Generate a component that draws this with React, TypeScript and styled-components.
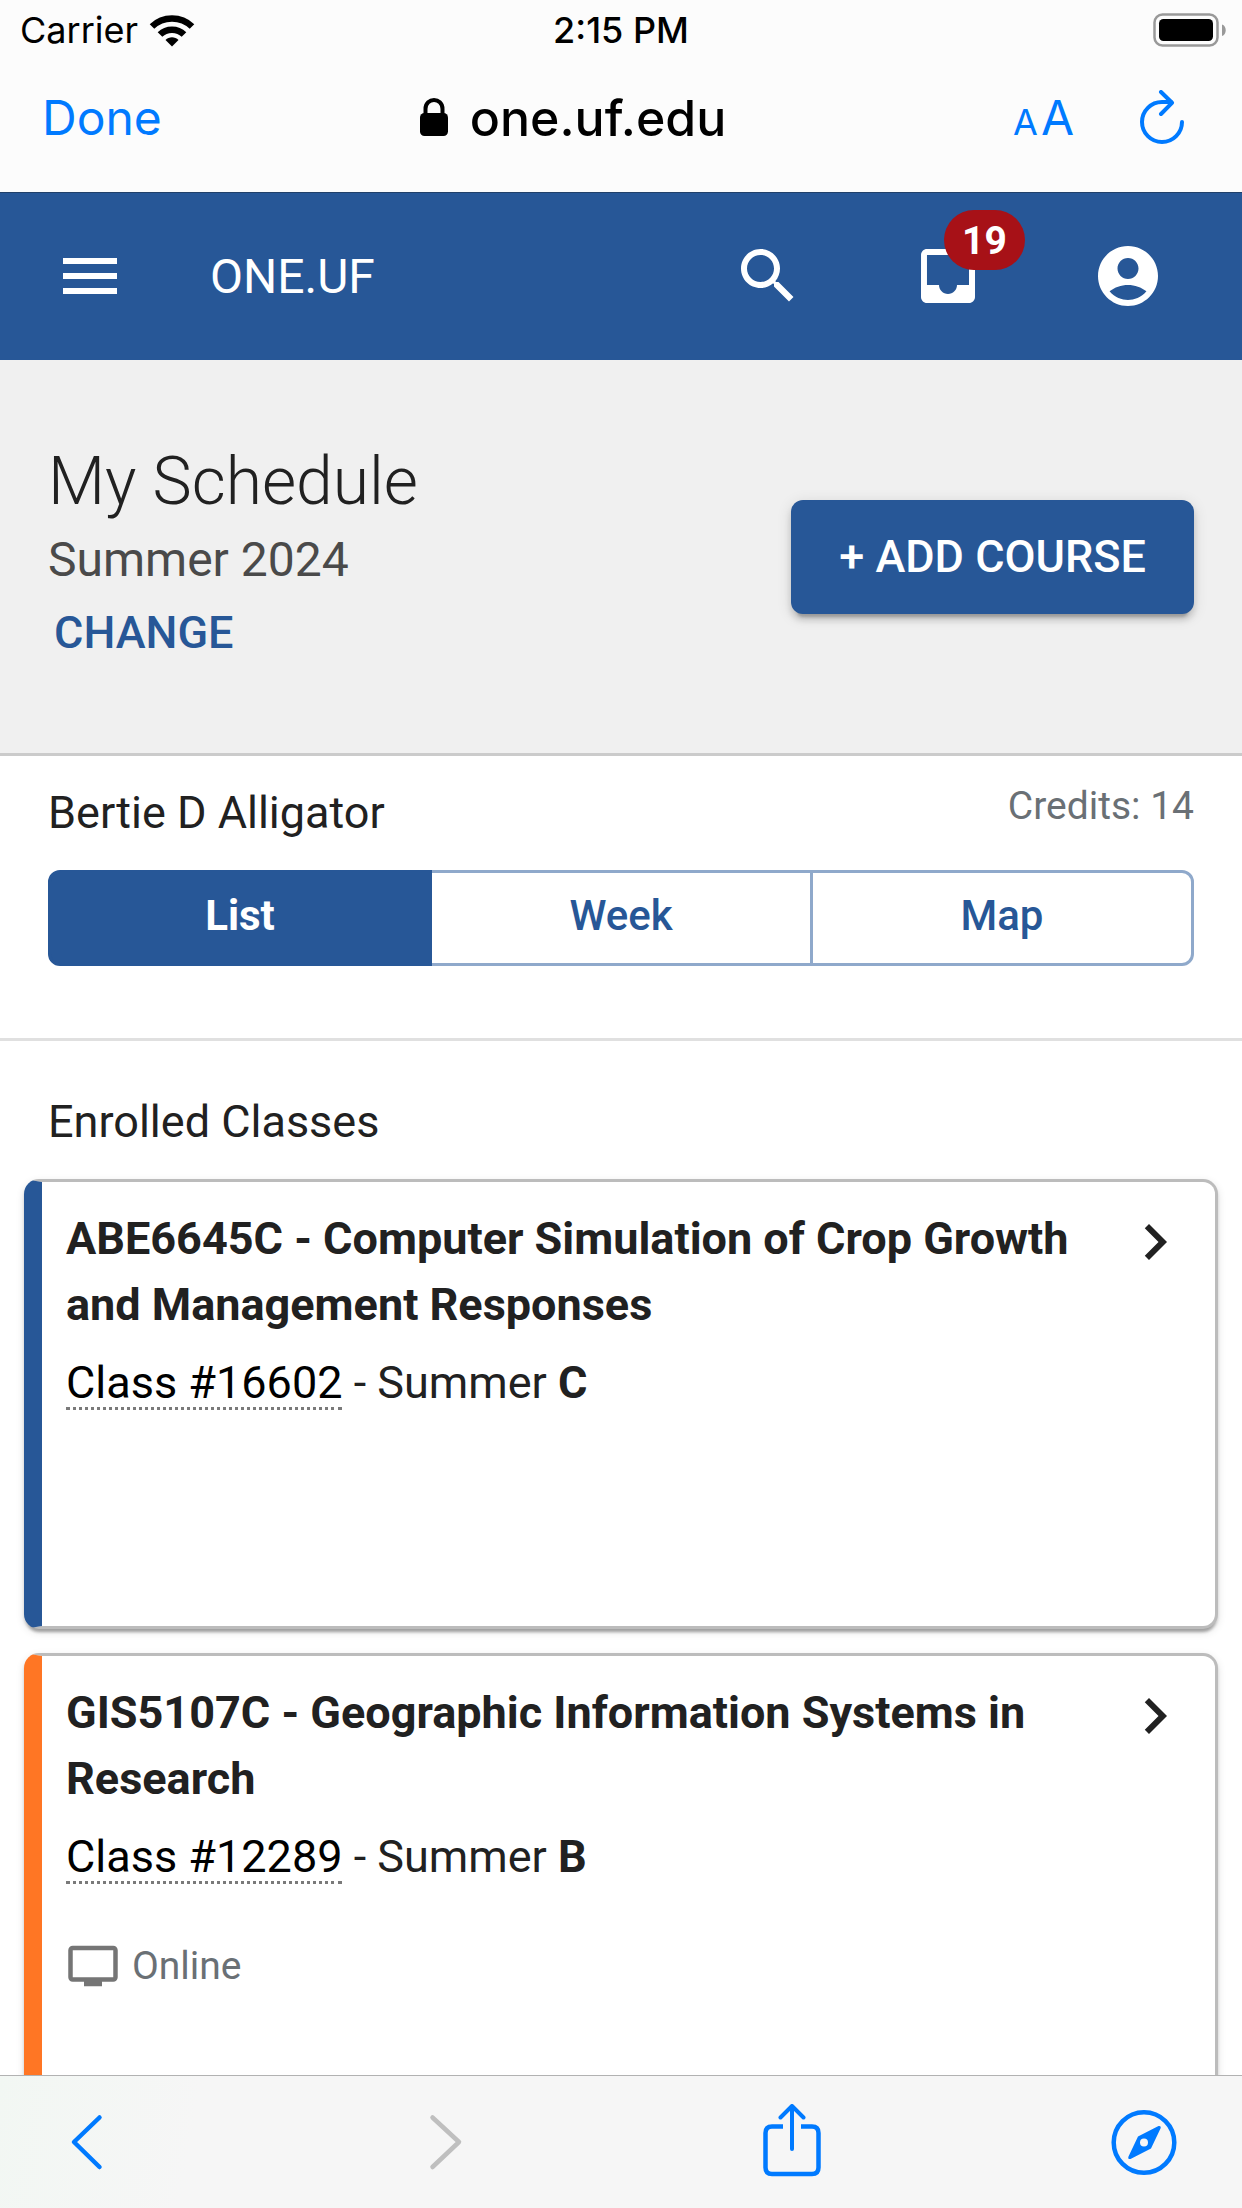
import React, { useState } from "react";
import styled, { createGlobalStyle } from "styled-components";

const color = {
  brand: "#275797",
  ios: "#007aff",
  ink: "#212121",
  muted: "#6a7075",
};

const systemFont = `Inter, "Liberation Sans", sans-serif`;

const GlobalStyle = createGlobalStyle`
  *, *::before, *::after { box-sizing: border-box; }
  body { margin: 0; background: #fff; }
  button { font: inherit; color: inherit; background: none; border: 0; padding: 0; margin: 0; cursor: pointer; }
  a { color: inherit; text-decoration: none; }
  h1, h2, h3, p { margin: 0; font-size: inherit; font-weight: inherit; }
  svg { display: block; flex: none; }
`;

const Screen = styled.div`
  display: flex;
  flex-direction: column;
  height: 100vh;
  overflow: hidden;
  font-family: Roboto, "Liberation Sans", sans-serif;
  font-size: 45px;
  line-height: 66px;
  color: ${color.ink};
`;

/* ---------- browser chrome ---------- */

const BrowserTop = styled.header`
  flex: none;
  background: #fcfcfc;
  font-family: ${systemFont};
  color: #000;
`;

const StatusBar = styled.div`
  display: grid;
  grid-template-columns: 1fr auto 1fr;
  align-items: center;
  height: 60px;
  padding: 0 15px;
  font-size: 36px;
  line-height: 60px;
`;

const Carrier = styled.div`
  display: flex;
  align-items: center;
  gap: 11px;
  padding-left: 5px;
`;

const Clock = styled.time`
  font-weight: 500;
`;

const BatterySlot = styled.div`
  justify-self: end;
`;

const AddressBar = styled.div`
  display: grid;
  grid-template-columns: 9fr auto 11fr;
  align-items: center;
  height: 132px;
  padding: 0 54px 16px 42px;
  font-size: 48px;
`;

const DoneButton = styled.button`
  justify-self: start;
  color: ${color.ios};
`;

const Address = styled.div`
  display: flex;
  align-items: center;
  gap: 22px;
  font-size: 50px;
  font-weight: 500;
`;

const AddressActions = styled.div`
  display: flex;
  align-items: center;
  justify-self: end;
  gap: 64px;
  color: ${color.ios};
`;

const TextSizeButton = styled.button`
  display: flex;
  align-items: baseline;
  gap: 3px;
  padding-top: 4px;
`;

const SmallLetter = styled.span`
  font-size: 36px;
`;

const BrowserBottom = styled.nav`
  flex: none;
  display: flex;
  align-items: center;
  justify-content: space-between;
  height: 133px;
  padding: 0 60px 0 48px;
  border-top: 1px solid #b2b2b2;
  background: linear-gradient(100deg, #f2f7f3 0%, #f6f6f6 16%, #f6f6f6 100%);
`;

const ToolButton = styled.button`
  color: ${color.ios};
  &:disabled {
    color: #bfbfbf;
    cursor: default;
  }
`;

/* ---------- site header ---------- */

const SiteHeader = styled.header`
  flex: none;
  display: flex;
  align-items: center;
  height: 168px;
  padding: 0 78px 0 54px;
  background: ${color.brand};
  box-shadow: inset 0 1px #20406a;
  color: #fff;
`;

const Brand = styled.a`
  flex: 1;
  margin-left: 84px;
  padding-top: 2px;
  font-size: 48px;
`;

const HeaderActions = styled.div`
  display: flex;
  gap: 108px;
`;

const HeaderButton = styled.button`
  position: relative;
`;

const Badge = styled.span`
  position: absolute;
  left: 32px;
  top: -30px;
  padding: 2px 18px 0;
  border-radius: 30px;
  background: #a71117;
  font-size: 39px;
  font-weight: 700;
  line-height: 58px;
`;

/* ---------- page ---------- */

const Page = styled.main`
  flex: 1;
  min-height: 0;
  overflow: hidden;
`;

const PageHeader = styled.section`
  display: flex;
  align-items: center;
  justify-content: space-between;
  padding: 81px 48px;
  border-bottom: 3px solid #cbcbcb;
  background: #f0f0f0;
`;

const Heading = styled.div`
  padding-bottom: 5px;
`;

const PageTitle = styled.h1`
  font-size: 66px;
  font-weight: 300;
  line-height: 82px;
`;

const Term = styled.p`
  padding-bottom: 2px;
  font-size: 48px;
  line-height: 74px;
  color: #4a4a4a;
`;

const ChangeButton = styled.button`
  display: block;
  padding: 0 6px;
  font-weight: 500;
  line-height: 68px;
  color: ${color.brand};
`;

const AddButton = styled.button`
  height: 114px;
  padding: 0 48px;
  border-radius: 12px;
  background: ${color.brand};
  color: #fff;
  font-weight: 500;
  box-shadow: 0 9px 3px -6px rgba(0, 0, 0, 0.2), 0 6px 6px rgba(0, 0, 0, 0.14),
    0 3px 15px rgba(0, 0, 0, 0.12);
`;

const StudentPanel = styled.section`
  padding: 24px 48px 72px;
  border-bottom: 3px solid #e0e0e0;
`;

const StudentRow = styled.div`
  display: flex;
  align-items: flex-start;
  justify-content: space-between;
  margin-bottom: 24px;
`;

const Credits = styled.p`
  font-size: 39px;
  line-height: 52px;
  color: ${color.muted};
`;

const ViewSwitch = styled.div`
  display: flex;
`;

const ViewButton = styled.button<{ $active: boolean }>`
  flex: 1;
  height: 96px;
  padding-bottom: 4px;
  border: 3px solid ${(p) => (p.$active ? color.brand : "#8fa9cb")};
  background: ${(p) => (p.$active ? color.brand : "transparent")};
  color: ${(p) => (p.$active ? "#fff" : color.brand)};
  font-size: 42px;
  font-weight: ${(p) => (p.$active ? 700 : 500)};
  position: relative;
  z-index: ${(p) => (p.$active ? 1 : 0)};

  &:not(:first-child) {
    margin-left: -3px;
  }
  &:first-child {
    border-radius: 12px 0 0 12px;
  }
  &:last-child {
    border-radius: 0 12px 12px 0;
  }
`;

const Classes = styled.section`
  padding: 48px 24px 24px;
`;

const SectionTitle = styled.h2`
  margin: 0 24px 24px;
`;

const CardList = styled.div`
  display: flex;
  flex-direction: column;
  gap: 24px;
`;

const Card = styled.article<{ $accent: string }>`
  display: flex;
  align-items: flex-start;
  min-height: 450px;
  padding: 24px;
  border: 3px solid #bcbcbc;
  border-left: 18px solid ${(p) => p.$accent};
  border-radius: 15px;
  background: #fff;
  box-shadow: 0 6px 3px -3px rgba(0, 0, 0, 0.2), 0 3px 3px rgba(0, 0, 0, 0.14),
    0 3px 9px rgba(0, 0, 0, 0.12);
`;

const CardBody = styled.div`
  flex: 1;
`;

const CourseTitle = styled.h3`
  font-weight: 700;
`;

const ClassLine = styled.p`
  margin-top: 12px;
`;

const ClassLink = styled.a`
  display: inline-block;
  border-bottom: 3px dotted #7a7a7a;
  line-height: 48px;
  color: #000;
`;

const Place = styled.p`
  display: flex;
  align-items: center;
  gap: 12px;
  margin-top: 48px;
  font-size: 39px;
  line-height: 56px;
  color: ${color.muted};
`;

/* ---------- icons ---------- */

const Material = ({ d, size = 72, fill = "currentColor" }: { d: string; size?: number; fill?: string }) => (
  <svg width={size} height={size} viewBox="0 0 24 24" fill={fill} aria-hidden="true">
    <path d={d} />
  </svg>
);

const paths = {
  menu: "M3 18h18v-2H3v2zm0-5h18v-2H3v2zm0-7v2h18V6H3z",
  search:
    "M15.5 14h-.79l-.28-.27C15.41 12.59 16 11.11 16 9.5 16 5.91 13.09 3 9.5 3S3 5.91 3 9.5 5.91 16 9.5 16c1.61 0 3.09-.59 4.23-1.57l.27.28v.79l5 4.99L20.49 19l-4.99-5zm-6 0C7.01 14 5 11.99 5 9.5S7.01 5 9.5 5 14 7.01 14 9.5 11.99 14 9.5 14z",
  inbox:
    "M19 3H4.99c-1.11 0-1.98.89-1.98 2L3 19c0 1.1.88 2 1.99 2H19c1.1 0 2-.9 2-2V5c0-1.11-.9-2-2-2zm0 12h-4c0 1.66-1.35 3-3 3s-3-1.34-3-3H4.99V5H19v10z",
  account:
    "M12 2C6.48 2 2 6.48 2 12s4.48 10 10 10 10-4.48 10-10S17.52 2 12 2zm0 4c1.93 0 3.5 1.57 3.5 3.5S13.93 13 12 13s-3.5-1.57-3.5-3.5S10.07 6 12 6zm0 14c-2.03 0-4.43-.82-6.14-2.88C7.55 15.8 9.68 15 12 15s4.45.8 6.14 2.12C16.43 19.18 14.03 20 12 20z",
  chevron: "M10 6L8.59 7.41 13.17 12l-4.58 4.59L10 18l6-6z",
  tv: "M21 3H3c-1.1 0-2 .9-2 2v12c0 1.1.9 2 2 2h5v2h8v-2h5c1.1 0 1.99-.9 1.99-2L23 5c0-1.1-.9-2-2-2zm0 14H3V5h18v12z",
};

const WifiIcon = () => (
  <svg width="46" height="33" viewBox="0 0 46 33" fill="none" aria-hidden="true">
    <path d="M3 12.5C14 1.8 32 1.8 43 12.5" stroke="#000" strokeWidth="6.5" />
    <path d="M11 20.5C17.5 14 28.5 14 35 20.5" stroke="#000" strokeWidth="6.5" />
    <path d="M23 32.5L16.5 26C20 22.3 26 22.3 29.5 26Z" fill="#000" />
  </svg>
);

const BatteryIcon = () => (
  <svg width="74" height="34" viewBox="0 0 74 34" aria-hidden="true">
    <rect x="1.5" y="1.5" width="63" height="31" rx="8" fill="none" stroke="#999" strokeWidth="2.5" />
    <rect x="6" y="6" width="54" height="22" rx="4.5" fill="#000" />
    <path d="M69 11.5C74 13 74 21.5 69 23Z" fill="#999" />
  </svg>
);

const LockIcon = () => (
  <svg width="28" height="40" viewBox="0 0 28 40" aria-hidden="true">
    <path d="M5.5 18V11C5.5 -1 22.5 -1 22.5 11V18" fill="none" stroke="#000" strokeWidth="4" />
    <rect y="15" width="28" height="23" rx="4.5" fill="#000" />
  </svg>
);

const ReloadIcon = () => (
  <svg width="50" height="56" viewBox="0 0 50 56" fill="none" stroke="currentColor" strokeWidth="4" strokeLinecap="round" strokeLinejoin="round" aria-hidden="true">
    <path d="M44 32A20 20 0 1 1 24 12H33" />
    <path d="M23 2L34 12.8L23 24" />
  </svg>
);

const ToolIcon = ({ children }: { children: React.ReactNode }) => (
  <svg width="76" height="76" viewBox="0 0 76 76" fill="none" stroke="currentColor" strokeWidth="4.5" strokeLinecap="round" strokeLinejoin="round" aria-hidden="true">
    {children}
  </svg>
);

/* ---------- data ---------- */

interface Course {
  title: string;
  classNumber: string;
  session: string;
  accent: string;
  online?: boolean;
}

const courses: Course[] = [
  {
    title: "ABE6645C - Computer Simulation of Crop Growth and Management Responses",
    classNumber: "16602",
    session: "C",
    accent: color.brand,
  },
  {
    title: "GIS5107C - Geographic Information Systems in Research",
    classNumber: "12289",
    session: "B",
    accent: "#ff7624",
    online: true,
  },
];

const views = ["List", "Week", "Map"];

const CourseCard = ({ course }: { course: Course }) => (
  <Card $accent={course.accent}>
    <CardBody>
      <CourseTitle>{course.title}</CourseTitle>
      <ClassLine>
        <ClassLink href="#class">Class #{course.classNumber}</ClassLink> - Summer <b>{course.session}</b>
      </ClassLine>
      {course.online && (
        <Place>
          <Material d={paths.tv} size={54} fill="#757575" />
          Online
        </Place>
      )}
    </CardBody>
    <button type="button" aria-label="Open class">
      <Material d={paths.chevron} />
    </button>
  </Card>
);

export default function App() {
  const [view, setView] = useState("List");

  return (
    <Screen>
      <GlobalStyle />
      <BrowserTop>
        <StatusBar>
          <Carrier>
            Carrier
            <WifiIcon />
          </Carrier>
          <Clock>2:15 PM</Clock>
          <BatterySlot>
            <BatteryIcon />
          </BatterySlot>
        </StatusBar>
        <AddressBar>
          <DoneButton type="button">Done</DoneButton>
          <Address>
            <LockIcon />
            one.uf.edu
          </Address>
          <AddressActions>
            <TextSizeButton type="button">
              <SmallLetter>A</SmallLetter>
              <span>A</span>
            </TextSizeButton>
            <button type="button" aria-label="Reload">
              <ReloadIcon />
            </button>
          </AddressActions>
        </AddressBar>
      </BrowserTop>

      <SiteHeader>
        <HeaderButton type="button" aria-label="Menu">
          <Material d={paths.menu} />
        </HeaderButton>
        <Brand href="#home">ONE.UF</Brand>
        <HeaderActions>
          <HeaderButton type="button" aria-label="Search">
            <Material d={paths.search} />
          </HeaderButton>
          <HeaderButton type="button" aria-label="Inbox">
            <Material d={paths.inbox} />
            <Badge>19</Badge>
          </HeaderButton>
          <HeaderButton type="button" aria-label="Account">
            <Material d={paths.account} />
          </HeaderButton>
        </HeaderActions>
      </SiteHeader>

      <Page>
        <PageHeader>
          <Heading>
            <PageTitle>My Schedule</PageTitle>
            <Term>Summer 2024</Term>
            <ChangeButton type="button">CHANGE</ChangeButton>
          </Heading>
          <AddButton type="button">+ ADD COURSE</AddButton>
        </PageHeader>

        <StudentPanel>
          <StudentRow>
            <p>Bertie D Alligator</p>
            <Credits>Credits: 14</Credits>
          </StudentRow>
          <ViewSwitch role="group" aria-label="Schedule view">
            {views.map((name) => (
              <ViewButton
                key={name}
                type="button"
                $active={view === name}
                aria-pressed={view === name}
                onClick={() => setView(name)}
              >
                {name}
              </ViewButton>
            ))}
          </ViewSwitch>
        </StudentPanel>

        <Classes>
          <SectionTitle>Enrolled Classes</SectionTitle>
          <CardList>
            {courses.map((course) => (
              <CourseCard key={course.classNumber} course={course} />
            ))}
          </CardList>
        </Classes>
      </Page>

      <BrowserBottom aria-label="Browser">
        <ToolButton type="button" aria-label="Back">
          <ToolIcon>
            <path d="M51.5 13.5L26 38L51.5 63" />
          </ToolIcon>
        </ToolButton>
        <ToolButton type="button" aria-label="Forward" disabled>
          <ToolIcon>
            <path d="M31.5 13.5L58 38L31.5 63" />
          </ToolIcon>
        </ToolButton>
        <ToolButton type="button" aria-label="Share">
          <ToolIcon>
            <path strokeLinecap="butt" d="M30 22.5H19Q12.5 22.5 12.5 29V63.5Q12.5 70 19 70H59Q65.5 70 65.5 63.5V29Q65.5 22.5 59 22.5H48" />
            <path strokeWidth="4" d="M39 45V3M27.5 13.5L39 2L50.5 13.5" />
          </ToolIcon>
        </ToolButton>
        <ToolButton type="button" aria-label="Open in browser">
          <ToolIcon>
            <circle cx="38" cy="38.5" r="30.3" />
            <path fill="currentColor" stroke="none" fillRule="evenodd" d="M52.5 22Q55.5 21.5 54.5 24.5L45 44.5L24.5 55Q21.5 55.5 22.5 52.5L32 32.5ZM38 34.5A4 4 0 1 0 38 42.5A4 4 0 1 0 38 34.5Z" />
          </ToolIcon>
        </ToolButton>
      </BrowserBottom>
    </Screen>
  );
}
